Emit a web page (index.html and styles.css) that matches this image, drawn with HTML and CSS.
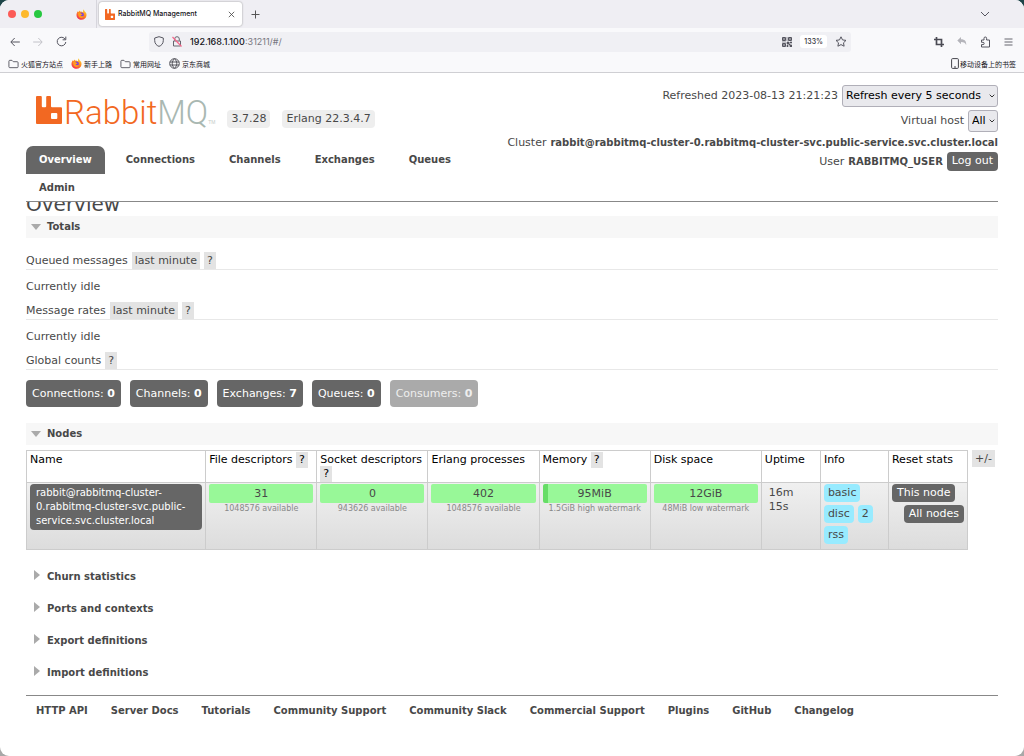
FILE: index.html
```html
<!DOCTYPE html>
<html lang="en">
<head>
<meta charset="utf-8">
<title>RabbitMQ Management</title>
<link rel="stylesheet" href="styles.css">
</head>
<body>
<svg class="defs" width="0" height="0" aria-hidden="true">
  <defs>
    <linearGradient id="flame" x1="0.8" y1="0" x2="0.2" y2="1">
      <stop offset="0" stop-color="#ffd93b"/><stop offset="0.45" stop-color="#ff8a1c"/><stop offset="1" stop-color="#f0245c"/>
    </linearGradient>
    <symbol id="fox" viewBox="0 0 16 16">
      <path fill="url(#flame)" d="M10 .5c1.500 1 2.300 2.200 2.700 3.300C14.500 5 15.500 7 15.300 9 15 13 12 15.700 8 15.700S.8 12.800.7 8.800C.7 6.500 1.500 4.600 2.700 3.200l.4 1.600L5.300 2l.6 2c1.300-.5 3-.3 4.100.7.700-1.300.6-2.800 0-4.200z"/>
      <circle cx="8" cy="8.700" r="3.500" fill="#7a3fe0"/>
      <path fill="#ff9a1f" d="M3 6c2-.8 3.600-.2 4.700.9L9.500 7.500C8.900 8.600 7.500 8.500 6.800 9c.8 1.900 3.300 1.800 4.600.5.2 2.200-1.600 3.700-3.600 3.600C4.700 13 2.800 10 3 6z"/>
    </symbol>
    <symbol id="folder" viewBox="0 0 12 10">
      <path d="M1 8V2q0-1 1-1h2.300l1.500 1.500H10q1 0 1 1V8q0 1-1 1H2Q1 9 1 8z" fill="none" stroke="#55555f"/>
    </symbol>
    <symbol id="rabbit" viewBox="0 0 26 28">
      <path fill="#f26822" d="M1 0h3.800q1 0 1 1v9.200q0 1 1 1h2.400q1 0 1-1V1q0-1 1-1H14q1 0 1 1v9.200q0 1 1 1h9q1 0 1 1V27q0 1-1 1H1q-1 0-1-1V1Q0 0 1 0zM16 17q-1 0-1 1v4q0 1 1 1h4.300q1 0 1-1v-4q0-1-1-1z"/>
    </symbol>
  </defs>
</svg>
<div class="window">
  <div class="tabstrip">
    <div class="lights"><i class="light red"></i><i class="light amber"></i><i class="light green"></i></div>
    <button class="icon pinned" aria-label="Pinned tab"><svg width="11" height="11"><use href="#fox"/></svg></button>
    <div class="browser-tab">
      <svg width="10" height="11"><use href="#rabbit"/></svg>
      <span class="tab-title">RabbitMQ Management</span>
      <button class="icon" aria-label="Close tab"><svg width="7" height="7" viewBox="0 0 7 7"><path d="M.8.8l5.400 5.400M6.200.8L.8 6.200" stroke="#444" stroke-width=".8" fill="none"/></svg></button>
    </div>
    <button class="icon" aria-label="New tab"><svg width="9" height="9" viewBox="0 0 9 9"><path d="M4.500.5v8M.5 4.500h8" stroke="#555" fill="none"/></svg></button>
    <button class="icon list-tabs" aria-label="List tabs"><svg width="10" height="6" viewBox="0 0 10 6"><path d="M1 1l4 4 4-4" stroke="#55555f" fill="none"/></svg></button>
  </div>

  <div class="toolbar">
    <div class="history">
      <button class="icon" aria-label="Back"><svg width="10" height="10" viewBox="0 0 10 10"><path d="M9.800 5H1M4.700 1L.8 5l3.900 4" stroke="#55555f" fill="none"/></svg></button>
      <button class="icon" aria-label="Forward"><svg width="10" height="10" viewBox="0 0 10 10"><path d="M.2 5H9M5.300 1l3.900 4-3.900 4" stroke="#c2c2c8" fill="none"/></svg></button>
      <button class="icon" aria-label="Reload"><svg width="11" height="11" viewBox="0 0 11 11"><path d="M9.200 3.300A4.300 4.300 0 1 0 9.800 6M9.800.6v3.200H6.600" stroke="#55555f" fill="none"/></svg></button>
    </div>
    <div class="address">
      <svg width="10" height="11" viewBox="0 0 10 11"><path d="M5 .7l4.300 1.300v2.500C9.300 7.500 7.500 9.500 5 10.400 2.500 9.500.7 7.500.7 4.500V2z" stroke="#55555f" fill="none"/></svg>
      <svg width="10" height="11" viewBox="0 0 10 11"><path d="M2.700 4.700V3a2.300 2.300 0 0 1 4.600 0v1.700M1.500 5h7v5h-7z" stroke="#66666f" fill="none"/><path d="M.5 1l9 9.500" stroke="#f4668a" stroke-width="1.200"/></svg>
      <input class="url-host" type="text" aria-label="Address" value="192.168.1.100"><span class="url-rest">:31211/#/</span>
      <div class="address-end">
        <svg width="10" height="10" viewBox="0 0 10 10"><path d="M.5.5h3v3h-3zM6.500.5h3v3h-3zM.5 6.500h3v3h-3z" stroke="#55555f" fill="none"/><path d="M1.500 1.500h1v1h-1zM7.500 1.500h1v1h-1zM1.500 7.500h1v1h-1zM5 0v4M0 5h4M5 5h2v2H5zM8 5h2v1H8zM5 8h1v2H5zM7 7h1v1H7zM8 8h2v2H8z" fill="#55555f" stroke="#55555f" stroke-width=".6"/></svg>
        <button class="zoom">133%</button>
        <button class="icon" aria-label="Bookmark"><svg width="12" height="11" viewBox="0 0 12 11"><path d="M6 .8l1.500 3.100 3.500.5-2.500 2.400.6 3.400L6 8.600l-3.100 1.600.6-3.400L1 4.400l3.500-.5z" stroke="#55555f" fill="none" stroke-linejoin="round"/></svg></button>
      </div>
    </div>
    <div class="tools">
      <button class="icon" aria-label="Capture"><svg width="10" height="10" viewBox="0 0 10 10"><path d="M2.500 0v7.500H10M0 2.500h7.500V10" stroke="#4b4b54" stroke-width="1.700" fill="none"/></svg></button>
      <button class="icon" aria-label="Undo"><svg width="10" height="9" viewBox="0 0 10 9"><path d="M4 0v2.200c3.800 0 5.500 2 5.200 6C8.500 6 7 5 4 5v2.200L.3 3.600z" fill="#b4b4ba"/></svg></button>
      <button class="icon" aria-label="Extensions"><svg width="11" height="12" viewBox="0 0 11 12"><path d="M1.500 4H4V2.300a1.300 1.300 0 0 1 2.600 0V4H9.500v7h-8V8.600H3a1.100 1.100 0 0 0 0-2.300H1.500z" stroke="#55555f" fill="none" stroke-linejoin="round"/></svg></button>
      <button class="icon" aria-label="Menu"><svg width="9" height="8" viewBox="0 0 9 8"><path d="M.5 1h8M.5 4h8M.5 7h8" stroke="#66666f" fill="none"/></svg></button>
    </div>
  </div>

  <div class="bookmarks">
    <a href="#"><svg width="11" height="10"><use href="#folder"/></svg>火狐官方站点</a>
    <a href="#"><svg width="11" height="11"><use href="#fox"/></svg>新手上路</a>
    <a href="#"><svg width="11" height="10"><use href="#folder"/></svg>常用网址</a>
    <a href="#"><svg width="11" height="11" viewBox="0 0 11 11"><path d="M5.500.7a4.800 4.800 0 1 1 0 9.600 4.800 4.800 0 0 1 0-9.600zM5.500.7c-3 2.600-3 7 0 9.600 3-2.600 3-7 0-9.600zM.9 4h9.200M.9 7h9.200" stroke="#44444c" stroke-width=".9" fill="none"/></svg>京东商城</a>
    <a class="mobile" href="#"><svg width="8" height="11" viewBox="0 0 8 11"><rect x=".6" y=".6" width="6.800" height="9.800" rx="1" stroke="#44444c" fill="none"/><path d="M3 9h2" stroke="#44444c"/></svg>移动设备上的书签</a>
  </div>

  <div class="page">
    <header class="header">
      <div class="brand-side">
        <div class="brand">
          <a class="logo" href="#"><svg width="26" height="28"><use href="#rabbit"/></svg><span class="logo-rabbit">Rabbit</span><span class="logo-mq">MQ</span><span class="logo-tm">TM</span></a>
          <span class="version">3.7.28</span>
          <span class="version">Erlang 22.3.4.7</span>
        </div>
        <nav class="tabs">
          <a class="selected" href="#">Overview</a>
          <a href="#">Connections</a>
          <a href="#">Channels</a>
          <a href="#">Exchanges</a>
          <a href="#">Queues</a>
          <a href="#">Admin</a>
        </nav>
      </div>
      <div class="session">
        <div class="session-row tall"><label for="refresh">Refreshed 2023-08-13 21:21:23</label>
          <span class="select wide"><select id="refresh"><option>Refresh every 5 seconds</option></select><svg width="6" height="4" viewBox="0 0 6 4"><path d="M.7.7L3 3 5.300.7" stroke="#333" fill="none"/></svg></span></div>
        <div class="session-row tall"><label for="vhost">Virtual host</label>
          <span class="select"><select id="vhost"><option>All</option></select><svg width="6" height="4" viewBox="0 0 6 4"><path d="M.7.7L3 3 5.300.7" stroke="#333" fill="none"/></svg></span></div>
        <div class="session-row">Cluster <b>rabbit@rabbitmq-cluster-0.rabbitmq-cluster-svc.public-service.svc.cluster.local</b></div>
        <div class="session-row">User <b>RABBITMQ_USER</b> <button class="dark">Log out</button></div>
      </div>
    </header>

    <main>
      <div class="heading"><h1>Overview</h1></div>
      <h2 class="bar open">Totals</h2>
      <div class="totals">
        <h3 class="stat">Queued messages <button class="tag">last minute</button> <button class="tag">?</button></h3>
        <p class="idle">Currently idle</p>
        <h3 class="stat">Message rates <button class="tag">last minute</button> <button class="tag">?</button></h3>
        <p class="idle">Currently idle</p>
        <h3 class="stat">Global counts <button class="tag">?</button></h3>
        <div class="counts">
          <a href="#">Connections: <b>0</b></a>
          <a href="#">Channels: <b>0</b></a>
          <a href="#">Exchanges: <b>7</b></a>
          <a href="#">Queues: <b>0</b></a>
          <a class="off" href="#">Consumers: <b>0</b></a>
        </div>
      </div>

      <h2 class="bar open">Nodes</h2>
      <div class="nodes">
        <table>
          <colgroup><col class="c-name"><col class="c-stat" span="5"><col class="c-up"><col class="c-info"><col class="c-reset"></colgroup>
          <thead><tr>
            <th>Name</th>
            <th>File descriptors <button class="tag">?</button></th>
            <th>Socket descriptors <button class="tag">?</button></th>
            <th>Erlang processes</th>
            <th>Memory <button class="tag">?</button></th>
            <th>Disk space</th>
            <th>Uptime</th>
            <th>Info</th>
            <th>Reset stats</th>
          </tr></thead>
          <tbody><tr>
            <td><a class="node" href="#">rabbit@rabbitmq-cluster-0.rabbitmq-cluster-svc.public-service.svc.cluster.local</a></td>
            <td><div class="meter">31</div><small>1048576 available</small></td>
            <td><div class="meter">0</div><small>943626 available</small></td>
            <td><div class="meter">402</div><small>1048576 available</small></td>
            <td><div class="meter used">95MiB</div><small>1.5GiB high watermark</small></td>
            <td><div class="meter">12GiB</div><small>48MiB low watermark</small></td>
            <td class="uptime">16m 15s</td>
            <td><div class="chips"><span>basic</span><span>disc</span><span>2</span><span>rss</span></div></td>
            <td><div class="resets"><button class="dark">This node</button><button class="dark">All nodes</button></div></td>
          </tr></tbody>
        </table>
        <button class="tag columns">+/-</button>
      </div>

      <div class="closed-list">
        <h2 class="bar closed">Churn statistics</h2>
        <h2 class="bar closed">Ports and contexts</h2>
        <h2 class="bar closed">Export definitions</h2>
        <h2 class="bar closed">Import definitions</h2>
      </div>
    </main>

    <footer class="footer">
      <a href="#">HTTP API</a>
      <a href="#">Server Docs</a>
      <a href="#">Tutorials</a>
      <a href="#">Community Support</a>
      <a href="#">Community Slack</a>
      <a href="#">Commercial Support</a>
      <a href="#">Plugins</a>
      <a href="#">GitHub</a>
      <a href="#">Changelog</a>
    </footer>
  </div>
</div>
</body>
</html>
```
FILE: styles.css
```css
* { box-sizing: border-box; }
body {
  margin: 0;
  background: linear-gradient(#1d4448, #a8a8a8);
  color: #484848;
  font: 11px/14px Verdana, "DejaVu Sans", sans-serif;
}
button, input, select { font: inherit; color: inherit; border: 0; margin: 0; padding: 0; background: none; }
a { color: inherit; text-decoration: none; }
h1, h2, h3, p { margin: 0; font-weight: normal; }
svg { display: block; flex: none; }
.defs { position: absolute; }
.icon { display: flex; align-items: center; justify-content: center; }

.window {
  min-height: 100vh;
  background: #fff;
  border-radius: 9px;
  overflow: hidden;
}

/* Browser chrome */
.tabstrip { display: flex; align-items: center; height: 28px; background: #efeef3; }
.lights { display: flex; gap: 5px; padding-left: 8px; }
.light { width: 8px; height: 8px; border-radius: 50%; }
.red { background: #fc5b57; }
.amber { background: #fdb92c; }
.green { background: #27c840; }
.pinned { margin-left: 34px; padding-right: 9px; height: 28px; border-right: 1px solid #d6d5dc; }
.browser-tab {
  display: flex; align-items: center; gap: 3px;
  width: 143px; height: 24px; margin: 0 9px 0 2px; padding: 0 7px 0 6px;
  background: #fff; border-radius: 3px; box-shadow: 0 0 2px #888;
}
.tab-title { flex: 1; color: #15141a; font: 500 7px/12px Inter, sans-serif; }
.list-tabs { margin: 0 34px 0 auto; }

.toolbar { display: flex; align-items: center; height: 27px; background: #f9f9fb; }
.history { display: flex; gap: 13px; padding-left: 10px; width: 149px; }
.address {
  display: flex; align-items: center; flex: 1; height: 20px; padding: 0 4px 0 5px;
  background: #f0f0f4; border-radius: 3px; font: 9px/12px Inter, sans-serif;
}
.address > svg { margin-right: 8px; }
.url-host { width: 55px; color: #15141a; font-weight: 500; }
.url-rest { color: #77777f; }
.address-end { display: flex; align-items: center; gap: 8px; margin-left: auto; }
.zoom { padding: 0 4px; background: #fff; border-radius: 3px; color: #33333b; font-size: 7px; font-weight: 500; line-height: 13px; }
.tools { display: flex; align-items: center; gap: 13px; width: 173px; padding-right: 11px; justify-content: flex-end; }

.bookmarks {
  display: flex; align-items: center; gap: 8px; height: 18px; padding: 0 8px;
  background: #f9f9fb; border-bottom: 1px solid #cfcfd3;
  color: #15141a; font: 7px/12px "Noto Sans CJK SC", sans-serif;
}
.bookmarks a { display: flex; align-items: center; gap: 2px; }
.bookmarks .mobile { margin-left: auto; gap: 1px; }

/* Page */
.page { padding: 0 26px; }
.header { display: flex; justify-content: space-between; height: 129px; border-bottom: 1px solid #888; }
.header b { font-size: 10px; }
.brand-side { flex: 1; min-width: 0; }
.brand { display: flex; align-items: flex-end; gap: 12px; height: 55px; padding-left: 10px; }
.logo { display: flex; align-items: baseline; font: 300 33px/30px Roboto, sans-serif; }
.logo svg { margin-right: 2px; }
.logo-rabbit { color: #f26822; }
.logo-mq { color: #a9b8b2; }
.logo-tm { color: #c5cbc8; font: 5px/6px "Liberation Sans", sans-serif; }
.version { padding: 2px 4px; background: #eee; border-radius: 4px; }
.tabs { display: flex; flex-wrap: wrap; column-gap: 8px; margin-top: 18px; font-size: 10px; font-weight: bold; }
.tabs a { padding: 7px 13px; }
.tabs .selected { background: #666; color: #fff; border-radius: 7px 7px 0 0; }

.session { display: flex; flex-direction: column; align-items: flex-end; padding-top: 10px; white-space: nowrap; }
.session-row { display: flex; align-items: center; gap: 4px; height: 19px; }
.session-row.tall { height: 25px; }
.dark { padding: 2px 5px 3px; background: #666; color: #fff; border-radius: 4px; }
.select { position: relative; display: flex; }
.select select {
  appearance: none; height: 22px; padding: 0 11px 0 3px;
  background: #e9e9ed; border: 1px solid #b0afb8; border-radius: 3px; color: #000;
}
.select.wide select { padding-right: 15px; }
.select svg { position: absolute; right: 3px; top: 9px; }

.heading { display: flex; align-items: flex-end; height: 14px; padding-bottom: 1px; overflow: hidden; }
.heading h1 { font-size: 20px; line-height: 22px; }
.bar { display: flex; align-items: center; gap: 6px; height: 22px; padding: 0 5px; font-size: 10px; font-weight: bold; }
.bar::before { content: ""; border: 5px solid transparent; }
.bar.open { background: #f7f7f7; }
.bar.open::before { border-top: 6px solid #aaa; border-bottom: 0; }
.bar.closed { height: 32px; gap: 7px; padding-left: 8px; }
.bar.closed::before { margin-bottom: 4px; border-left: 6px solid #aaa; border-right: 0; }

.totals { padding: 14px 0 16px; }
.stat { display: flex; gap: 4px; height: 18px; align-items: flex-end; border-bottom: 1px solid #e8e8e8; font-size: 11px; line-height: 17px; }
.tag { padding: 0 3px; background: #e3e3e3; line-height: 17px; }
.idle { padding-top: 2px; line-height: 30px; }
.counts { display: flex; gap: 9px; padding-top: 10px; }
.counts a { padding: 6px; background: #666; color: #fff; border-radius: 4px; line-height: 15px; }
.counts .off { background: #aaa; color: #eee; }

.nodes { display: flex; align-items: flex-start; gap: 4px; padding: 5px 3px 0 0; }
table { flex: 1; width: 100%; table-layout: fixed; border-collapse: collapse; }
.c-name { width: 179px; }
.c-stat { width: 111px; }
.c-up { width: 59px; }
.c-info { width: 68px; }
.c-reset { width: 79px; }
th, td { border: 1px solid #ccc; padding: 1px 3px; text-align: left; vertical-align: top; }
th { height: 32px; padding: 2px 3px 0; color: #000; font-weight: normal; line-height: 14px; }
th .tag { margin: -1px 0; line-height: 16px; }
td { height: 67px; }
tbody tr { background: linear-gradient(#f0f0f0, #dcdcdc); }
.node { display: block; padding: 2px 6px; background: #666; color: #fff; border-radius: 4px; font-size: 10px; }
.meter { background: #98f898; border-radius: 2px; text-align: center; line-height: 19px; }
.meter.used { background: linear-gradient(90deg, #66dd66 5%, #98f898 5%); }
small { display: block; color: #888; font-size: 8px; line-height: 12px; text-align: center; white-space: nowrap; }
td.uptime { padding: 3px 7px; }
.chips { display: flex; flex-wrap: wrap; gap: 3px 4px; }
.chips span { padding: 2px 4px; background: #98ebff; border-radius: 4px; }
.resets { display: flex; flex-direction: column; align-items: flex-start; gap: 3px; }
.resets .dark { padding: 2px 5px; }
.resets .dark + .dark { align-self: flex-end; }
.closed-list { padding: 11px 0 6px; }

.footer { display: flex; flex-wrap: wrap; gap: 23px; padding: 8px 10px; border-top: 1px solid #888; font-size: 10px; font-weight: bold; }
```
